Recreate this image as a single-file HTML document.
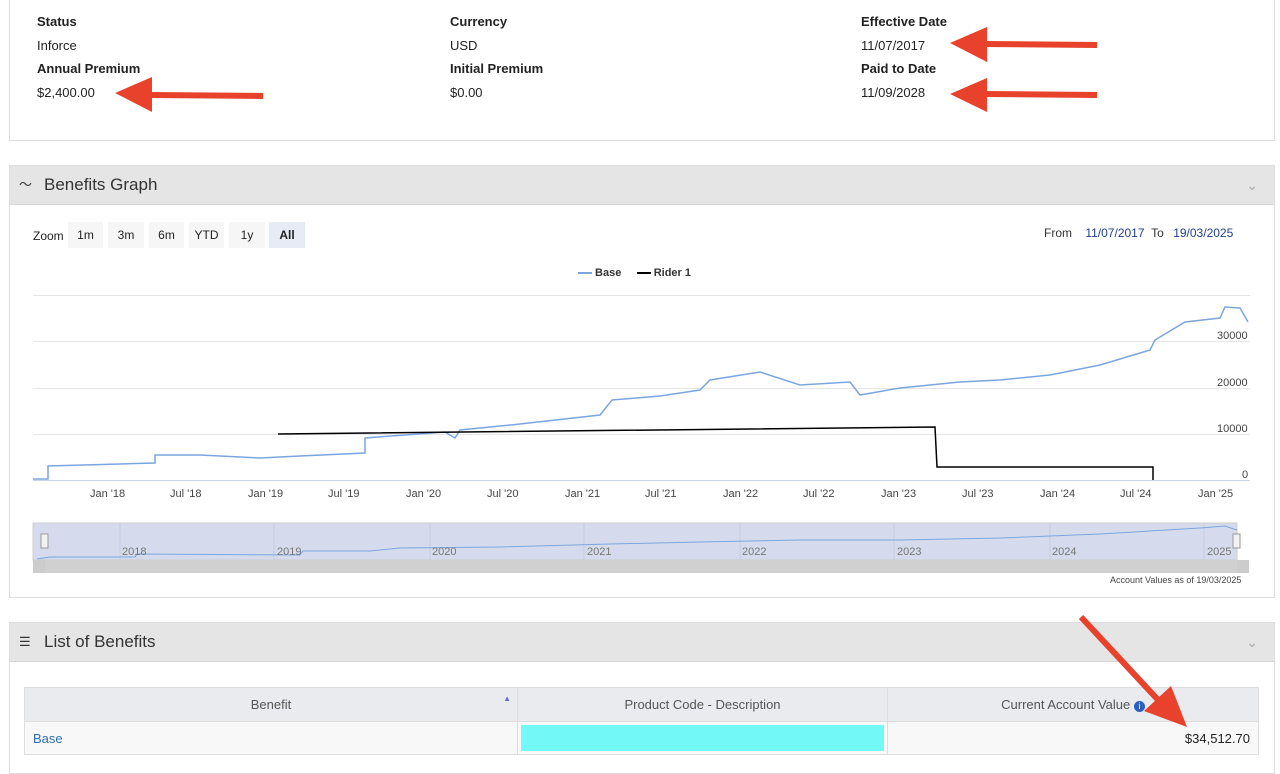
<!DOCTYPE html>
<html><head><meta charset="utf-8"><style>
body{margin:0;width:1280px;height:759px;overflow:hidden;background:#fff;font-family:"Liberation Sans",sans-serif;color:#222;position:relative}
.abs{position:absolute}
.b{font-weight:bold;font-size:13px}
.v{font-size:13px}
.panel{position:absolute;left:9px;width:1264px;border:1px solid #ddd;background:#fff}
.hd{height:38px;background:#e5e5e5;border-bottom:1px solid #d6d6d6;font-size:17px;color:#333;line-height:38px;padding-left:34px;position:relative}
.btn{position:absolute;top:222px;height:26px;background:#f6f6f6;font-size:12px;line-height:26px;text-align:center;color:#222}
.ax{position:absolute;font-size:11px;color:#444}
th{font-weight:normal}
</style></head><body>
<div class="panel" style="top:-1px;height:140px"></div>
<div class="abs b" style="left:37px;top:14px">Status</div>
<div class="abs v" style="left:37px;top:38px">Inforce</div>
<div class="abs b" style="left:37px;top:61px">Annual Premium</div>
<div class="abs v" style="left:37px;top:85px">$2,400.00</div>
<div class="abs b" style="left:450px;top:14px">Currency</div>
<div class="abs v" style="left:450px;top:38px">USD</div>
<div class="abs b" style="left:450px;top:61px">Initial Premium</div>
<div class="abs v" style="left:450px;top:85px">$0.00</div>
<div class="abs b" style="left:861px;top:14px">Effective Date</div>
<div class="abs v" style="left:861px;top:38px">11/07/2017</div>
<div class="abs b" style="left:861px;top:61px">Paid to Date</div>
<div class="abs v" style="left:861px;top:85px">11/09/2028</div>

<div class="panel" style="top:165px;height:431px">
<div class="hd"><span style="position:absolute;left:9px;font-size:13px">〜</span>Benefits Graph<span style="position:absolute;right:16px;top:0;color:#aaa;font-size:14px">⌄</span></div>
</div>
<div class="abs" style="left:33px;top:229px;font-size:12px">Zoom</div>
<div class="btn" style="left:68px;width:35px">1m</div>
<div class="btn" style="left:108px;width:36px">3m</div>
<div class="btn" style="left:149px;width:35px">6m</div>
<div class="btn" style="left:189px;width:35px">YTD</div>
<div class="btn" style="left:229px;width:36px">1y</div>
<div class="btn" style="left:269px;width:36px;background:#e6ebf5;font-weight:bold">All</div>
<div class="abs" style="left:1044px;top:226px;font-size:12px;color:#333">From <span style="color:#1f3f8c;margin-left:10px">11/07/2017</span> &nbsp;To <span style="color:#1f3f8c;margin-left:6px">19/03/2025</span></div>
<div class="abs" style="left:578px;top:267px;font-size:11px;font-weight:bold;color:#333"><span style="display:inline-block;width:14px;height:2px;background:#7aa6e0;vertical-align:middle"></span> Base &nbsp;&nbsp;&nbsp; <span style="display:inline-block;width:14px;height:2px;background:#000;vertical-align:middle"></span> Rider 1</div>
<svg class="abs" style="left:0;top:0" width="1280" height="759">
<g stroke="#e6e6e6" stroke-width="1"><line x1="33" y1="295.5" x2="1250" y2="295.5"/><line x1="33" y1="341.5" x2="1250" y2="341.5"/><line x1="33" y1="388.5" x2="1250" y2="388.5"/><line x1="33" y1="434.5" x2="1250" y2="434.5"/></g>
<line x1="33" y1="480.5" x2="1250" y2="480.5" stroke="#ccd6eb"/>
<polyline fill="none" stroke="#7aa6e0" stroke-width="1.5" points="33,479 48,479 48,466 120,464 155,463 155,455 200,455 260,458 300,456 365,453 365,438 445,432 455,438 460,430 520,424 600,415 612,400 660,396 700,390 710,380 760,372 800,385 850,382 860,395 900,388 960,382 1000,380 1050,375 1100,365 1150,350 1155,340 1185,322 1220,318 1225,307 1240,308 1248,322"/>
<polyline fill="none" stroke="#000" stroke-width="1.5" points="278,434 935,427 937,467 1153,467 1153,480"/>
<rect x="33" y="523" width="1204" height="37" fill="#d5dbec" stroke="#ccc"/>
<g stroke="#c7cde0"><line x1="120" y1="523" x2="120" y2="560"/><line x1="274" y1="523" x2="274" y2="560"/><line x1="430" y1="523" x2="430" y2="560"/><line x1="584" y1="523" x2="584" y2="560"/><line x1="740" y1="523" x2="740" y2="560"/><line x1="894" y1="523" x2="894" y2="560"/><line x1="1050" y1="523" x2="1050" y2="560"/><line x1="1204" y1="523" x2="1204" y2="560"/></g>
<polyline fill="none" stroke="#7aa6e0" points="37,559 50,557 135,557 137,554 300,555 303,551 370,551 400,548 500,547 610,544 700,542 800,540 900,540 1000,538 1100,534 1200,528 1225,526 1237,530"/>
<rect x="33" y="560" width="1216" height="13" fill="#ccc"/>
<rect x="45" y="560" width="1192" height="13" fill="#d0d0d0"/>
<rect x="41" y="534" width="7" height="14" fill="#f2f2f2" stroke="#999"/>
<rect x="1233" y="534" width="7" height="14" fill="#f2f2f2" stroke="#999"/>
</svg>
<div class="ax" style="left:1217px;top:330px">30000</div>
<div class="ax" style="left:1217px;top:377px">20000</div>
<div class="ax" style="left:1217px;top:423px">10000</div>
<div class="ax" style="left:1242px;top:469px">0</div>
<div class="ax" style="left:90px;top:488px">Jan '18</div><div class="ax" style="left:170px;top:488px">Jul '18</div><div class="ax" style="left:248px;top:488px">Jan '19</div><div class="ax" style="left:328px;top:488px">Jul '19</div><div class="ax" style="left:406px;top:488px">Jan '20</div><div class="ax" style="left:487px;top:488px">Jul '20</div><div class="ax" style="left:565px;top:488px">Jan '21</div><div class="ax" style="left:645px;top:488px">Jul '21</div><div class="ax" style="left:723px;top:488px">Jan '22</div><div class="ax" style="left:803px;top:488px">Jul '22</div><div class="ax" style="left:881px;top:488px">Jan '23</div><div class="ax" style="left:962px;top:488px">Jul '23</div><div class="ax" style="left:1040px;top:488px">Jan '24</div><div class="ax" style="left:1120px;top:488px">Jul '24</div><div class="ax" style="left:1198px;top:488px">Jan '25</div>
<div class="ax" style="left:122px;top:546px;color:#777">2018</div><div class="ax" style="left:277px;top:546px;color:#777">2019</div><div class="ax" style="left:432px;top:546px;color:#777">2020</div><div class="ax" style="left:587px;top:546px;color:#777">2021</div><div class="ax" style="left:742px;top:546px;color:#777">2022</div><div class="ax" style="left:897px;top:546px;color:#777">2023</div><div class="ax" style="left:1052px;top:546px;color:#777">2024</div><div class="ax" style="left:1207px;top:546px;color:#777">2025</div>
<div class="ax" style="left:1110px;top:575px;font-size:9px">Account Values as of 19/03/2025</div>

<div class="panel" style="top:622px;height:150px">
<div class="hd"><span style="position:absolute;left:9px;font-size:13px">☰</span>List of Benefits<span style="position:absolute;right:16px;top:0;color:#aaa;font-size:14px">⌄</span></div>
</div>
<table class="abs" style="left:24px;top:687px;width:1235px;border-collapse:collapse;font-size:13px">
<tr style="background:#e9ebee;height:34px;color:#555"><th style="width:490px;border:1px solid #ddd;position:relative">Benefit<span style="position:absolute;right:6px;top:6px;font-size:8px;color:#6a6ad0">▲</span></th><th style="width:367px;border:1px solid #ddd">Product Code - Description</th><th style="border:1px solid #ddd">Current Account Value <span style="display:inline-block;width:11px;height:11px;border-radius:50%;background:#2b5fbf;color:#fff;font-size:9px;line-height:11px">i</span></th></tr>
<tr style="background:#f8f8f8;height:33px"><td style="padding-left:8px;color:#2f6db3;border:1px solid #ddd">Base</td><td style="border:1px solid #ddd;padding:3px"><div style="background:#73f8f8;height:26px"></div></td><td style="text-align:right;padding-right:8px;border:1px solid #ddd">$34,512.70</td></tr>
</table>

<svg class="abs" style="left:0;top:0" width="1280" height="759">
<g fill="#e8412c" stroke="#e8412c">
<line x1="150" y1="95" x2="263" y2="96" stroke-width="6"/><polygon points="115,93 152,77 152,112" stroke="none"/>
<line x1="985" y1="44" x2="1097" y2="45" stroke-width="6"/><polygon points="950,43 987,27 987,62" stroke="none"/>
<line x1="985" y1="94" x2="1097" y2="95" stroke-width="6"/><polygon points="950,94 987,78 987,112" stroke="none"/>
<line x1="1081" y1="617" x2="1160" y2="702" stroke-width="6"/><polygon points="1187,727 1144,711 1171,686" stroke="none"/>
</g></svg>
</body></html>
